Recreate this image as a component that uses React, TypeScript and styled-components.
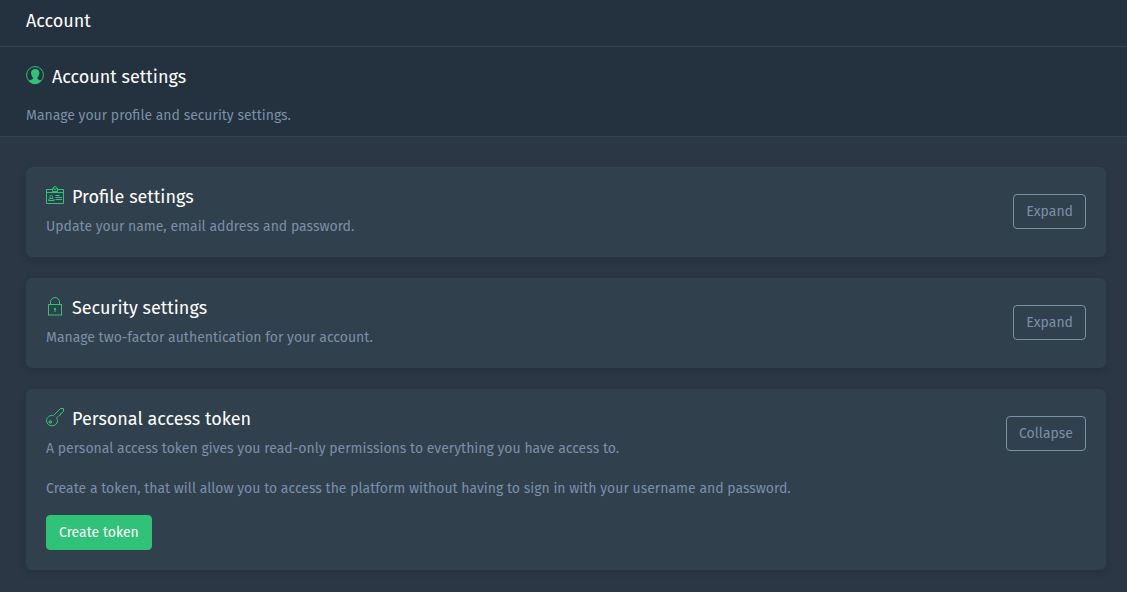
import React, { useState } from "react";
import styled, { createGlobalStyle } from "styled-components";

const GlobalStyle = createGlobalStyle`
  *, *::before, *::after { box-sizing: border-box; }
  body {
    margin: 0;
    background: #2b3744;
    color: #7b8fa9;
    font-family: "Fira Sans", "Noto Sans", sans-serif;
    font-size: 14px;
    line-height: 21px;
  }
  h1, h2, p { margin: 0; }
`;

const TopBar = styled.header`
  display: flex;
  align-items: center;
  padding: 8px 26px 11px;
  background: #24313e;
  border-bottom: 1px solid #33424f;
`;

const PageTitle = styled.h1`
  color: #fff;
  font-size: 18px;
  font-weight: 400;
  line-height: 27px;
`;

const Intro = styled.section`
  display: flex;
  flex-direction: column;
  gap: 14px;
  padding: 17px 26px 10px;
  background: #24313e;
  border-bottom: 1px solid #33424f;
`;

const Heading = styled.h2`
  display: flex;
  align-items: center;
  gap: 7px;
  color: #fff;
  font-size: 18px;
  font-weight: 400;
  line-height: 27px;
`;

const Icon = styled.svg`
  flex: none;
  width: 19px;
  height: 19px;
  margin-bottom: 4px;
  color: #2fc278;
`;

const CardList = styled.main`
  display: flex;
  flex-direction: column;
  gap: 21px;
  padding: 30px 21px 22px 26px;
`;

const Card = styled.section`
  padding: 17px 20px 20px;
  background: #31404d;
  border-radius: 6px;
  box-shadow: 0 3px 6px rgba(20, 30, 40, 0.18);
`;

const CardHeader = styled.div`
  display: flex;
  align-items: flex-start;
  justify-content: space-between;
  gap: 20px;
`;

const CardText = styled.div`
  display: flex;
  flex-direction: column;
  gap: 5px;
`;

const CardBody = styled.div`
  display: flex;
  flex-direction: column;
  align-items: flex-start;
  gap: 16px;
  padding-top: 19px;
`;

const Button = styled.button<{ $primary?: boolean }>`
  flex: none;
  height: 35px;
  margin-top: ${(p) => (p.$primary ? 0 : 10)}px;
  padding: 0 12px;
  border: 1px solid ${(p) => (p.$primary ? "#2fc278" : "#7b8fa9")};
  border-radius: 4px;
  background: ${(p) => (p.$primary ? "#2fc278" : "transparent")};
  color: ${(p) => (p.$primary ? "#fff" : "#7b8fa9")};
  font: inherit;
  cursor: pointer;
`;

const UserIcon = () => (
  <Icon viewBox="0 0 19 19" aria-hidden="true">
    <circle cx="9" cy="9" r="8.4" fill="none" stroke="currentColor" strokeWidth="1" />
    <path
      fill="currentColor"
      d="M9.200 3C7 3 5 4.300 5 6.700c0 .6 0 .9.2 1.300.3 1.600 1 2.800 1.700 3.500v1.300c-.4.9-2.600 1.200-4.300 2.200C4.300 16.900 6.600 18.200 9 18.200s4.800-1.300 6.400-3.200c-1.700-1-3.500-1.300-3.900-2.200v-1.300c.8-.7 1.400-1.900 1.700-3.500.2-.4.2-.8.2-1.300C13.400 4.300 11.500 3 9.200 3z"
    />
  </Icon>
);

const BadgeIcon = () => (
  <Icon viewBox="0 0 19 19" fill="none" stroke="currentColor" aria-hidden="true">
    <path d="M.5 3.500h6M11.500 3.500h6v14H.5v-14M.5 6.500h17M6.500 2.500v3h5v-3h-1.200M6.500 2.500h1.200" />
    <circle cx="9" cy="2" r="1.500" />
    <path d="M2.500 14.500v-1l1.500-1h3l1 1v1z" />
    <rect x="4" y="9.500" width="2.500" height="3" rx="1" />
    <path d="M9.500 9.500h4M9.500 11.500h6.500M9.500 13.500h6.500" />
  </Icon>
);

const LockIcon = () => (
  <Icon viewBox="0 0 19 19" fill="none" stroke="currentColor" aria-hidden="true">
    <rect x="2.500" y="7.500" width="13" height="10.500" />
    <path d="M4.500 7.500V5a4.500 4.500 0 0 1 9 0v2.500M9 11v4" />
    <circle cx="9" cy="12" r=".7" />
  </Icon>
);

const KeyIcon = () => (
  <Icon viewBox="0 0 19 19" fill="none" stroke="currentColor" strokeLinejoin="round" aria-hidden="true">
    <path d="M7.500 7.500 14.500.5h3v3l-1.500 1.500-1.500.5v1.500l-1.500.5-2.500 2.500c.7 1 1 2 1 2.800a5.500 5 0 0 1-11 0c0-3.500 3.500-6 7-5.300z" />
    <circle cx="4.300" cy="14" r="1.300" fill="currentColor" fillOpacity=".6" />
  </Icon>
);

type SectionProps = {
  icon: React.ReactNode;
  title: string;
  summary: string;
  initiallyOpen?: boolean;
  children?: React.ReactNode;
};

function SettingsCard({ icon, title, summary, initiallyOpen = false, children }: SectionProps) {
  const [open, setOpen] = useState(initiallyOpen);
  return (
    <Card>
      <CardHeader>
        <CardText>
          <Heading>
            {icon}
            {title}
          </Heading>
          <p>{summary}</p>
        </CardText>
        <Button type="button" aria-expanded={open} onClick={() => setOpen(!open)}>
          {open ? "Collapse" : "Expand"}
        </Button>
      </CardHeader>
      {open && children ? <CardBody>{children}</CardBody> : null}
    </Card>
  );
}

export default function App() {
  return (
    <>
      <GlobalStyle />
      <TopBar>
        <PageTitle>Account</PageTitle>
      </TopBar>
      <Intro>
        <Heading>
          <UserIcon />
          Account settings
        </Heading>
        <p>Manage your profile and security settings.</p>
      </Intro>
      <CardList>
        <SettingsCard
          icon={<BadgeIcon />}
          title="Profile settings"
          summary="Update your name, email address and password."
        />
        <SettingsCard
          icon={<LockIcon />}
          title="Security settings"
          summary="Manage two-factor authentication for your account."
        />
        <SettingsCard
          icon={<KeyIcon />}
          title="Personal access token"
          summary="A personal access token gives you read-only permissions to everything you have access to."
          initiallyOpen
        >
          <p>
            Create a token, that will allow you to access the platform without having to sign in with your username and
            password.
          </p>
          <Button type="button" $primary>
            Create token
          </Button>
        </SettingsCard>
      </CardList>
    </>
  );
}
